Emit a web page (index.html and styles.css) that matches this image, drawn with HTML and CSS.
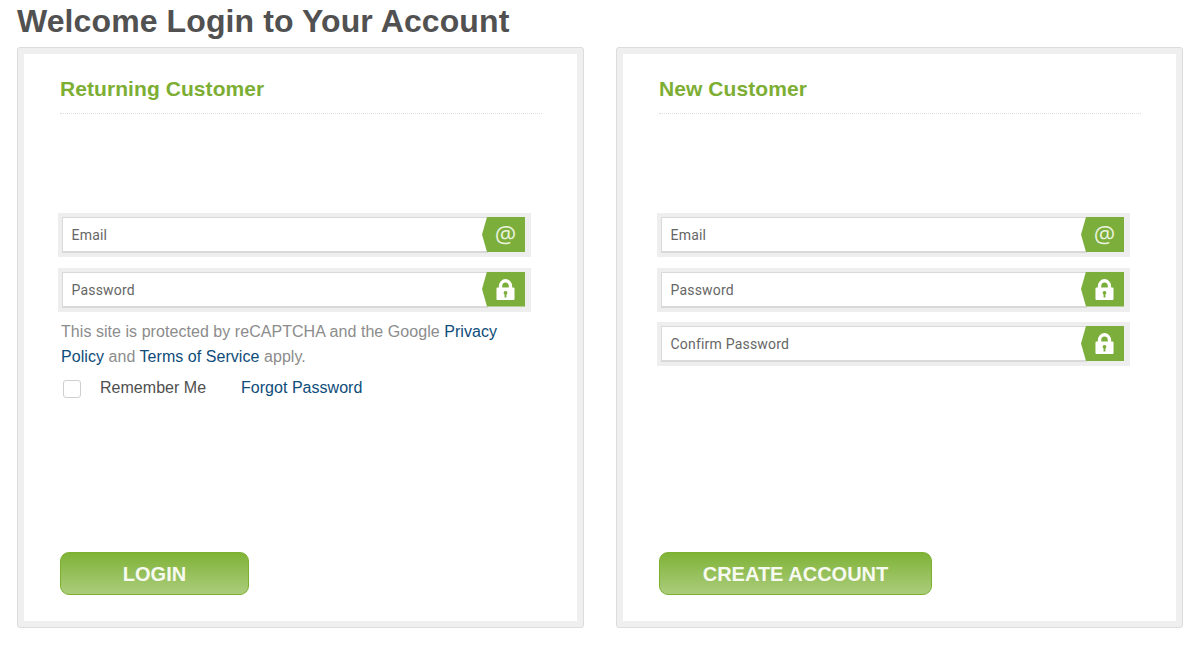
FILE: index.html
```html
<!DOCTYPE html>
<html lang="en">
<head>
<meta charset="utf-8">
<title>Welcome Login to Your Account</title>
<link rel="stylesheet" href="styles.css">
</head>
<body>
<svg class="defs" width="0" height="0" aria-hidden="true">
  <symbol id="lock" viewBox="0 0 20 22">
    <path fill="#fff" fill-rule="evenodd" d="M3 9V7.500a7 7.500 0 0 1 14 0V9h1.500a1 1 0 0 1 1 1v11a1 1 0 0 1-1 1h-17a1 1 0 0 1-1-1V10a1 1 0 0 1 1-1zM6.500 9h7V7.500a3.500 4 0 0 0-7 0zM10 12.500a2 2 0 0 0-1 3.700V19.500h2v-3.300a2 2 0 0 0-1-3.700z"/>
  </symbol>
</svg>
<h1 class="page-title">Welcome Login to Your Account</h1>
<main class="cards">
  <section class="card">
    <div class="card-inner">
      <h2 class="card-title">Returning Customer</h2>
      <form class="fields">
        <div class="field"><div class="input"><span>Email</span></div><div class="tag"><span class="at">@</span></div></div>
        <div class="field"><div class="input"><span>Password</span></div><div class="tag"><svg class="lock"><use href="#lock"/></svg></div></div>
      </form>
      <p class="notice">This site is protected by reCAPTCHA and the Google <a href="#">Privacy Policy</a> and <a href="#">Terms of Service</a> apply.</p>
      <div class="remember">
        <span class="checkbox"></span>
        <span class="remember-label">Remember Me</span>
        <a href="#">Forgot Password</a>
      </div>
      <a class="button login" href="#">LOGIN</a>
    </div>
  </section>
  <section class="card">
    <div class="card-inner">
      <h2 class="card-title">New Customer</h2>
      <form class="fields">
        <div class="field"><div class="input"><span>Email</span></div><div class="tag"><span class="at">@</span></div></div>
        <div class="field"><div class="input"><span>Password</span></div><div class="tag"><svg class="lock"><use href="#lock"/></svg></div></div>
        <div class="field"><div class="input"><span>Confirm Password</span></div><div class="tag"><svg class="lock"><use href="#lock"/></svg></div></div>
      </form>
      <a class="button create" href="#">CREATE ACCOUNT</a>
    </div>
  </section>
</main>
</body>
</html>
```

FILE: styles.css
```css
* { box-sizing: border-box; }
html, body { height: 100%; }
body {
  margin: 0;
  padding: 0 17px;
  background: #fff;
  font-family: "Liberation Sans", Arial, sans-serif;
  overflow: hidden;
}
.defs { position: absolute; }
.page-title {
  margin: 0;
  height: 47px;
  font-size: 32px;
  line-height: 42px;
  font-weight: 700;
  letter-spacing: 0.1px;
  color: #515151;
}
.cards {
  display: flex;
  gap: 32px;
  width: 1166px;
}
.card {
  flex: 1 1 0;
  height: 581px;
  border: 1px solid #dcdcdc;
  border-radius: 3px;
  background: #efefef;
  padding: 6px;
}
.card-inner {
  height: 100%;
  background: #fff;
  padding: 23px 35.500px 26px 36px;
  display: flex;
  flex-direction: column;
}
.card-title {
  flex: none;
  margin: 0;
  height: 37px;
  padding-bottom: 10px;
  font-size: 21px;
  line-height: 23px;
  font-weight: 700;
  letter-spacing: 0.07px;
  color: #7dae34;
  border-bottom: 1px dotted #dfdfdf;
}
.fields {
  margin: 99px 0 0 -2px;
  width: 473px;
  display: flex;
  flex-direction: column;
  gap: 10.5px;
}
.field {
  display: flex;
  height: 44px;
  padding: 4px;
  background: #eeeeee;
}
.input {
  flex: 1;
  display: flex;
  align-items: center;
  padding: 1px 0 0 8.5px;
  margin-right: -6px;
  background: #fff;
  border: 1px solid #d9d9d9;
  border-bottom-width: 2px;
  font-family: Roboto, sans-serif;
  font-size: 14px;
  letter-spacing: 0.2px;
  color: #666;
}
.tag {
  flex: none;
  width: 43px;
  height: 35px;
  margin-right: 2px;
  background: #7cae3c;
  clip-path: polygon(5px 0, 100% 0, 100% 100%, 5px 100%, 0 50%);
  display: flex;
  align-items: center;
  justify-content: center;
  padding-left: 4px;
  color: #e9f2dc;
}
.at {
  font-family: "Open Sans", sans-serif;
  font-size: 24px;
  font-weight: 400;
  line-height: 1;
  margin-top: -2px;
}
.lock {
  width: 19px;
  height: 21px;
}
.notice {
  margin: 7px 0 0 1px;
  width: 460px;
  font-size: 16px;
  line-height: 25px;
  letter-spacing: 0.05px;
  color: #8c8c8c;
}
a { color: #0e4c7a; text-decoration: none; }
.remember {
  margin-top: 9px;
  display: flex;
  align-items: center;
  font-size: 16px;
  line-height: 20px;
  letter-spacing: 0.03px;
  color: #4f4f4f;
}
.checkbox {
  width: 18px;
  height: 18px;
  margin: 2px 0 0 3px;
  border: 1px solid #cfcfcf;
  border-radius: 3px;
  background: #fff;
}
.remember-label { margin-left: 19px; width: 141px; }
.button {
  margin-top: auto;
  height: 43px;
  padding-top: 2px;
  display: flex;
  align-items: center;
  justify-content: center;
  align-self: flex-start;
  border: 1px solid #7cb02f;
  border-radius: 9px;
  background: linear-gradient(#7fb337, #abcc7c);
  color: #f7faf0;
  font-size: 20px;
  font-weight: 700;
}
.login { width: 189px; }
.create { width: 273px; }
```
